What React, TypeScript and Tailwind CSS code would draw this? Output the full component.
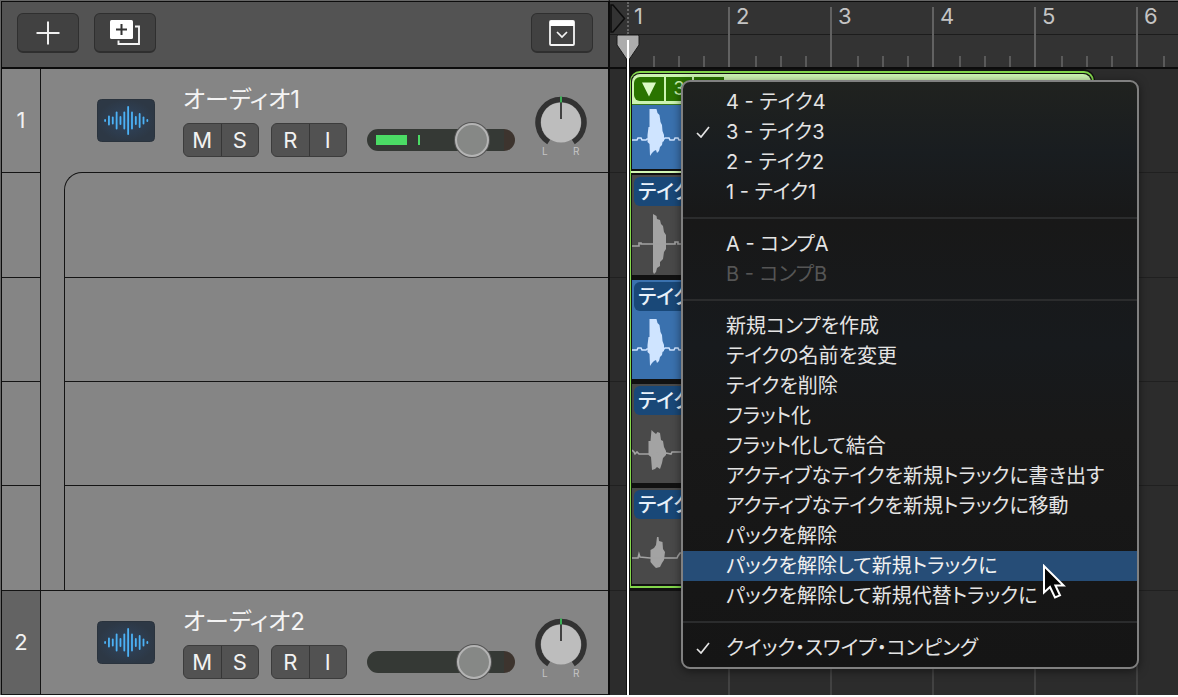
import type { ReactNode } from "react";

const jp = "font-['Inter','Noto_Sans_CJK_JP',sans-serif] [font-feature-settings:'palt']";

const ICON_BARS = [3, 10, 8, 18, 9, 18, 29, 18, 9, 15, 8, 3];

function AudioIcon() {
  return (
    <svg viewBox="0 0 58 43" className="h-[43px] w-[58px] shrink-0" aria-hidden="true">
      <defs>
        <radialGradient id="audioFill">
          <stop offset="0" stopColor="#2f4560" />
          <stop offset="1" stopColor="#2d3845" />
        </radialGradient>
      </defs>
      <rect x="0.5" y="0.5" width="57" height="42" rx="4" fill="url(#audioFill)" stroke="#2a333d" />
      {ICON_BARS.map((h, i) => (
        <rect key={i} x={7.2 + i * 3.84} y={21.5 - h / 2} width="1.8" height={h} rx="0.9" fill="#4cb2f6" />
      ))}
    </svg>
  );
}

function HeaderButton({ label, children }: { label: string; children: ReactNode }) {
  return (
    <button
      aria-label={label}
      className="flex h-10 w-[62px] items-center justify-center rounded-md border border-b-2 border-[#2f2f2f] bg-[#414141]"
    >
      {children}
    </button>
  );
}

function ButtonPair({ labels }: { labels: string[] }) {
  return (
    <div className="flex h-[34px] w-[76px] divide-x divide-[#363636] overflow-hidden rounded-md border border-[#3c3c3c] bg-[#525252]">
      {labels.map((l) => (
        <button key={l} className="flex-1 font-['Inter',sans-serif] text-[22px] leading-8 text-[#f2f2f2]">
          {l}
        </button>
      ))}
    </div>
  );
}

function PanKnob() {
  return (
    <svg viewBox="0 0 54 64" className="h-16 w-[54px]" role="img" aria-label="パン">
      <path d="M14.7 47 A23 23 0 1 1 39.3 47" fill="none" stroke="#323232" strokeWidth="5.5" />
      <circle cx="27" cy="27.5" r="20" fill="#bdbdbd" />
      <path d="M27 7v17" stroke="#222" strokeWidth="1.6" />
      <path d="M27 1.5v6" stroke="#3fd060" strokeWidth="1.6" />
      <text x="8" y="60" fontSize="10" fill="#c4c4c4" fontFamily="Inter">L</text>
      <text x="39" y="60" fontSize="10" fill="#c4c4c4" fontFamily="Inter">R</text>
    </svg>
  );
}

function TrackHeader({ name, volume, playing }: { name: string; volume: number; playing: boolean }) {
  return (
    <div className="flex h-full items-start pl-14">
      <div className="pt-[30px]">
        <AudioIcon />
      </div>
      <div className="pt-3.5 pl-7">
        <h2 className={`${jp} pb-1.5 text-[24px] leading-[34px] text-[#f4f4f4]`}>{name}</h2>
        <div className="flex items-center gap-3">
          <ButtonPair labels={["M", "S"]} />
          <ButtonPair labels={["R", "I"]} />
          <div className="relative ml-2 h-[22px] w-[148px] rounded-full bg-[linear-gradient(to_right,#353935_137px,#3d342e_137px)]">
            {playing && (
              <div className="absolute inset-y-[6px] left-[9px] flex gap-[11px]">
                <span className="w-[31px] bg-[#4bdc65]" />
                <span className="w-[2px] bg-[#4bdc65]" />
              </div>
            )}
            <input
              type="range"
              aria-label={`${name} 音量`}
              defaultValue={volume}
              className="absolute -inset-y-1.5 left-0 w-full appearance-none bg-transparent [&::-webkit-slider-thumb]:h-[34px] [&::-webkit-slider-thumb]:w-[34px] [&::-webkit-slider-thumb]:appearance-none [&::-webkit-slider-thumb]:rounded-full [&::-webkit-slider-thumb]:border-2 [&::-webkit-slider-thumb]:border-[#b4b4b4] [&::-webkit-slider-thumb]:bg-[#868886] [&::-webkit-slider-thumb]:shadow-[0_0_0_1px_#555]"
            />
          </div>
        </div>
      </div>
      <div className="pt-[26px] pl-[19px]">
        <PanKnob />
      </div>
    </div>
  );
}

const WAVES = {
  comp: "15.5,-4 16.5,-12 17.5,-12 17.5,-30 24.5,-30 25.5,-26 27.5,-24 28.5,-17 30,-14 30.5,-8 32,-4 32,2 30.5,3 30,6 28,8 27,12 25,14 24,11 22,12 20,14 18,17 17.5,5 15.5,3",
  take4: "21,-30 24.5,-28 25,-25 28,-24 29,-20 31,-18 32,-12 34,-9 34,5 32,8 31,15 28,18 28,22 25,24 24,28 22,30 21,28",
  take2: "16.5,-12 18.5,-12 19.5,-23 21.5,-21 24,-19 25.5,-21 28,-20 29,-13 31,-12 32,-6 34,-2 34,2 31,5 30,10 28,16 25,14 23,16 20,17 19,4 16.5,2",
  take1: "18.5,-7 22,-9 24,-12 25,-20 26.5,-20 27,-16 30.5,-15 31,-8 33,-5 32,3 30,6 28,10 24,11 21,8 18.5,5",
};

const LINES = {
  comp: "0,1 5,1 6,-1 9,-1 10,1 14,1 15,0 32,0 33,-1 37,-1 38,1 42,1 43,-1 46,-1 47,1 50,1",
  take4: "0,2 7,2 7,-1 9,-1 9,0 43,0 43,-2 46,-2 46,0 50,0",
  take2: "0,-3 2,-1 3,1 5,-1 7,1 16,1 34,0 39,1 40,-1 50,-1",
  take1: "0,1 6,1 7,-3 8,0 18,1 33,1 45,1 46,-1 48,-4 50,-4",
};

function Wave({ kind, color, mid }: { kind: keyof typeof WAVES; color: string; mid: number }) {
  return (
    <svg viewBox="0 0 50 68" className="h-[68px] w-[50px] shrink-0" aria-hidden="true">
      <g transform={`translate(0 ${mid})`}>
        <polygon points={WAVES[kind]} fill={color} />
        <polyline points={LINES[kind]} fill="none" stroke={color} strokeWidth="1.6" />
      </g>
    </svg>
  );
}

function TakeLane({ kind, active, last }: { kind: keyof typeof WAVES; active?: boolean; last?: boolean }) {
  return (
    <div className={`flex min-h-0 bg-[#111] pt-[2px] pr-1 pl-[3px] ${last ? "pb-[7px]" : "pb-[3px]"}`}>
      <div className={`min-h-0 flex-1 overflow-hidden ${active ? "bg-[#3a71ae]" : "bg-[#494949]"}`}>
        <div className={`${jp} mx-0.5 mt-0.5 h-[29px] rounded-md bg-[#194878] pl-1 text-[20px] leading-[31px] font-medium text-[#e9f1fa]`}>
          テイク
        </div>
        <Wave kind={kind} color={active ? "#cfe4ff" : "#a3a3a3"} mid={38} />
      </div>
    </div>
  );
}

function TakeFolder() {
  return (
    <div className="absolute top-0 left-[19px] grid h-5/6 w-[466px] grid-rows-5 overflow-hidden rounded-tr-xl bg-[#111]">
      <div className="flex min-h-0 flex-col border-b-2 border-[#d3f7b3] pt-[5px] pr-1 pb-[2px] pl-[3px]">
        <div className="flex h-[31px] shrink-0 gap-[2px] rounded-t-lg border-b border-[#3b7a1b] bg-[#cdf4b2] py-[3px] pl-[2px]">
          <button aria-label="テイクフォルダを開閉" className="flex w-[30px] items-center justify-center rounded-l-md bg-[#2a7400]">
            <svg viewBox="0 0 16 15" className="h-[15px] w-4">
              <path d="M1 0.5h14l-7 14z" fill="#dcfac6" />
            </svg>
          </button>
          <button className="w-[26px] bg-[#2a7400] font-['Inter',sans-serif] text-[18px] leading-6 text-[#c8f0ae]">3</button>
          <span className="w-[30px] bg-[#2a7400]" />
        </div>
        <div className="min-h-0 flex-1 overflow-hidden bg-[#3a71ae]">
          <Wave kind="comp" color="#cfe4ff" mid={34} />
        </div>
      </div>
      <TakeLane kind="take4" />
      <TakeLane kind="comp" active />
      <TakeLane kind="take2" />
      <TakeLane kind="take1" last />
      <div className="pointer-events-none absolute inset-x-px top-[2px] bottom-[3px] rounded-t-[10px] border-2 border-l border-[#83d64c]" />
    </div>
  );
}

function Check() {
  return (
    <svg viewBox="0 0 14 12" className="h-3 w-3.5" aria-hidden="true">
      <path d="M1 7l4 4L13 1" fill="none" stroke="#e4e4e4" strokeWidth="1.7" />
    </svg>
  );
}

type Item = { text: string; checked?: boolean; disabled?: boolean; selected?: boolean };

const GROUPS: Item[][] = [
  [{ text: "4 - テイク4" }, { text: "3 - テイク3", checked: true }, { text: "2 - テイク2" }, { text: "1 - テイク1" }],
  [{ text: "A - コンプA" }, { text: "B - コンプB", disabled: true }],
  [
    { text: "新規コンプを作成" },
    { text: "テイクの名前を変更" },
    { text: "テイクを削除" },
    { text: "フラット化" },
    { text: "フラット化して結合" },
    { text: "アクティブなテイクを新規トラックに書き出す" },
    { text: "アクティブなテイクを新規トラックに移動" },
    { text: "パックを解除" },
    { text: "パックを解除して新規トラックに", selected: true },
    { text: "パックを解除して新規代替トラックに" },
  ],
  [{ text: "クイック・スワイプ・コンピング", checked: true }],
];

function TakeMenu() {
  return (
    <div
      role="menu"
      className="absolute top-20 left-[681px] w-[458px] rounded-[9px] border-2 border-[#808080] bg-[linear-gradient(to_bottom,#20221f,#191d20_12%,#181818_24%,#171a1d_45%,#181818_60%,#151515)] pt-[5px] pb-1 shadow-[0_2px_10px_rgba(0,0,0,0.5)]"
    >
      {GROUPS.map((group, g) => (
        <div key={g}>
          {g > 0 && (
            <div className="flex h-[22px] items-center">
              <hr className="w-full border-t-2 border-[#2b2c2d]" />
            </div>
          )}
          {group.map((item) => (
            <button
              key={item.text}
              role="menuitem"
              disabled={item.disabled}
              className={`${jp} flex h-[30px] w-full items-center text-left text-[20px] leading-[30px] whitespace-nowrap ${
                item.selected ? "bg-[#264d77] text-[#f0f0f0]" : item.disabled ? "text-[#555]" : "text-[#e4e4e4]"
              }`}
            >
              <span className="flex w-[43px] shrink-0 pl-[13px]">{item.checked && <Check />}</span>
              {item.text}
            </button>
          ))}
        </div>
      ))}
    </div>
  );
}

function Ruler() {
  return (
    <div className="flex h-[67px] overflow-hidden border-b-2 border-[#0c0c0c] bg-[#333]">
      <div className="h-[33px] w-4 shrink-0 border-b border-[#1c1c1c] pt-[2px]">
        <svg viewBox="0 0 16 30" className="h-[30px] w-4" aria-hidden="true">
          <path d="M1 1h2L14.5 14.5 3 28H1z" fill="#333" stroke="#0c0c0c" strokeWidth="1.5" />
        </svg>
      </div>
      {[1, 2, 3, 4, 5, 6].map((bar) => (
        <div key={bar} className="flex w-[102px] shrink-0 flex-col">
          <div className={`mt-[5px] flex flex-1 flex-col border-l-2 ${bar === 1 ? "border-transparent" : "border-[#626262]"}`}>
            <div className="h-7 border-b border-[#1c1c1c] pl-1.5 font-['Inter',sans-serif] text-[22px] leading-[18px] text-[#c4c4c4]">
              {bar}
            </div>
            <div className="grid flex-1 grid-cols-4 items-end">
              {[0, 1, 2, 3].map((beat) => (
                <span key={beat} className={beat === 0 ? "h-0" : "h-[11px] border-l-2 border-[#5a5a5a]"} />
              ))}
            </div>
          </div>
        </div>
      ))}
    </div>
  );
}

function TrackNumber({ n, dim }: { n: number | null; dim?: boolean }) {
  return (
    <div
      className={`flex w-[39px] shrink-0 items-center justify-center border-r border-[#141414] font-['Inter',sans-serif] text-[22px] text-[#f2f2f2] ${
        dim ? "bg-[#636363]" : ""
      }`}
    >
      {n}
    </div>
  );
}

export default function App() {
  return (
    <main className="relative flex h-screen min-h-[697px] overflow-hidden bg-white pb-0.5">
      <section className="flex w-[610px] shrink-0 flex-col border-t border-r-2 border-l border-t-[#666] border-r-[#0c0c0c] border-l-[#666] bg-[#858585]">
        <header className="flex h-[68px] shrink-0 items-center gap-[15px] border-t border-b-2 border-l border-[#0c0c0c] bg-[#535353] px-[15px] pb-[3px]">
          <HeaderButton label="トラックを追加">
            <svg viewBox="0 0 24 24" className="h-6 w-6">
              <path d="M0.5 12h23M12 0.5v23" stroke="#f0f0f0" strokeWidth="2" />
            </svg>
          </HeaderButton>
          <HeaderButton label="トラックを複製">
            <svg viewBox="0 0 30 25" className="h-[25px] w-[30px]">
              <rect x="0" y="0" width="23" height="19" rx="1.5" fill="#fff" />
              <path d="M11.5 4v11M6 9.5h11" stroke="#333" strokeWidth="2" />
              <path d="M25 6.5h4v17.500H8.500v-3.500" fill="none" stroke="#f4f4f4" strokeWidth="1.9" />
            </svg>
          </HeaderButton>
          <div className="flex-1" />
          <HeaderButton label="グローバルトラックを表示">
            <svg viewBox="0 0 26 26" className="h-[26px] w-[26px]">
              <rect x="1" y="1" width="24" height="24" rx="1" fill="none" stroke="#f4f4f4" strokeWidth="1.8" />
              <rect x="1" y="1" width="24" height="5" fill="#fff" />
              <path d="M8 12l5 5 5-5" fill="none" stroke="#f4f4f4" strokeWidth="1.7" />
            </svg>
          </HeaderButton>
        </header>
        <div className="grid min-h-0 flex-1 grid-rows-6 border-l border-[#0c0c0c]">
          <div className="flex min-h-0">
            <div className="flex border-b border-[#141414]">
              <TrackNumber n={1} />
            </div>
            <TrackHeader name="オーディオ1" volume={77} playing />
          </div>
          {[0, 1, 2, 3].map((lane) => (
            <div key={lane} className="flex min-h-0">
              <div className="flex border-b border-[#141414]">
                <TrackNumber n={null} />
              </div>
              <div className={`w-[23px] shrink-0 ${lane === 3 ? "border-b border-[#141414]" : ""}`} />
              <div
                className={`flex-1 border-b border-l border-[#141414] ${lane === 0 ? "-mt-px rounded-tl-[18px] border-t" : ""}`}
              />
            </div>
          ))}
          <div className="flex min-h-0 border-b border-[#141414]">
            <TrackNumber n={2} dim />
            <TrackHeader name="オーディオ2" volume={79} playing={false} />
          </div>
        </div>
      </section>

      <section className="flex min-w-0 flex-1 flex-col border-t border-[#666] bg-[#2c2c2c]">
        <div className="border-t border-[#0c0c0c]">
          <Ruler />
        </div>
        <div className="relative grid min-h-0 flex-1 grid-rows-6">
          {[0, 1, 2, 3, 4].map((row) => (
            <div key={row} className="border-b border-[#202020]" />
          ))}
          <div className="flex min-h-0 overflow-hidden pl-4">
            {[1, 2, 3, 4, 5, 6].map((bar) => (
              <div key={bar} className="w-[102px] shrink-0 border-l-2 border-[#424242]" />
            ))}
          </div>
          <TakeFolder />
        </div>
      </section>

      <div className="absolute top-[2px] bottom-0.5 left-[616px] flex w-6 flex-col items-center">
        <div className="h-8 shrink-0 border-l-2 border-dotted border-[#666]" />
        <svg viewBox="0 0 24 26" className="h-[26px] w-6 shrink-0" aria-hidden="true">
          <path d="M2.500 1h19q1.500 0 1.500 1.500V11L13.500 25h-3L1 11V2.500Q1 1 2.500 1z" fill="#acacac" stroke="#1c1c1c" />
          <path d="M12 6v20" stroke="#fff" strokeWidth="2" />
        </svg>
        <div className="-mt-px w-1 flex-1 border-x border-[#111] bg-white" />
      </div>

      <TakeMenu />

      <svg viewBox="0 0 24 36" className="pointer-events-none absolute top-[564px] left-[1042px] h-9 w-6" aria-hidden="true">
        <path d="M2 2v26.500l6-5.500 5 10.500 5-2.200-4.600-9.800h8.200z" fill="#050505" stroke="#fff" strokeWidth="2" />
      </svg>
    </main>
  );
}
